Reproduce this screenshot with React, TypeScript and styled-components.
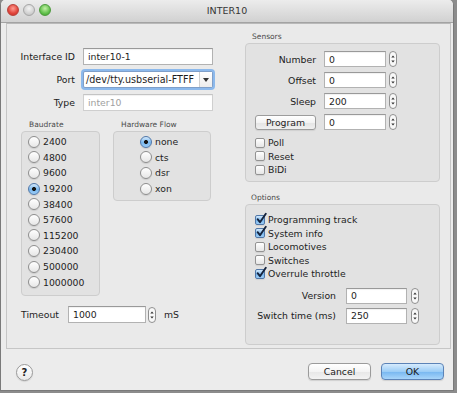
import React from "react";
import styled, { createGlobalStyle } from "styled-components";

const GlobalStyle = createGlobalStyle`
  html, body {
    margin: 0;
    padding: 0;
    background: #8c8c8c;
  }
  body {
    font-family: "DejaVu Sans", "Liberation Sans", sans-serif;
    font-size: 9.3px;
    color: #1e1e1e;
  }
`;

const Window = styled.div`
  box-sizing: border-box;
  width: 454px;
  height: 391px;
  display: flex;
  flex-direction: column;
  background: #ececec;
  border: 1px solid #7a7a7a;
  border-top: none;
  border-radius: 5px 5px 0 0;
  overflow: hidden;
`;

const TitleBar = styled.div`
  flex: none;
  height: 22px;
  display: grid;
  grid-template-columns: 1fr auto 1fr;
  align-items: center;
  background: linear-gradient(#ececec, #d1d1d1);
  border-bottom: 1px solid #a3a3a3;
`;

const Lights = styled.div`
  display: flex;
  gap: 4px;
  padding-left: 6px;
  margin-top: -2px;
`;

const Light = styled.span<{ $color: "red" | "gray" | "green" }>`
  box-sizing: border-box;
  width: 12px;
  height: 12px;
  border-radius: 50%;
  border: 1px solid
    ${(p) => (p.$color === "red" ? "#b8413a" : p.$color === "green" ? "#4c9a3c" : "#a6a6a6")};
  background: ${(p) =>
    p.$color === "red"
      ? "radial-gradient(circle at 50% 35%, #ff9c92, #e0443a 60%, #c3322a)"
      : p.$color === "green"
      ? "radial-gradient(circle at 50% 35%, #c3f0a6, #62c14d 60%, #3f9a2e)"
      : "radial-gradient(circle at 50% 35%, #f4f4f4, #d2d2d2 60%, #b9b9b9)"};
`;

const Title = styled.div`
  font-size: 9.5px;
  color: #363636;
  margin-top: -2px;
`;

const Panel = styled.div`
  box-sizing: border-box;
  flex: none;
  height: 326px;
  margin: 0 2px 0 5px;
  border: 1px solid #c6c6c6;
  border-top-color: #b9b9b9;
  background: #eaeaea;
  display: grid;
  grid-template-columns: 238px 195px;
`;

const LeftCol = styled.div`
  display: flex;
  flex-direction: column;
  padding-top: 24px;
`;

const FormGrid = styled.div`
  display: grid;
  grid-template-columns: 68px 130px;
  column-gap: 8px;
  row-gap: 6px;
  align-items: center;
`;

const Label = styled.span`
  text-align: right;
  white-space: nowrap;
  color: #202020;
`;

const Field = styled.div<{ $w: number; $h?: number; $disabled?: boolean }>`
  box-sizing: border-box;
  width: ${(p) => p.$w}px;
  height: ${(p) => p.$h ?? 16}px;
  padding: 0 4px;
  display: flex;
  align-items: center;
  background: #fff;
  border: 1px solid ${(p) => (p.$disabled ? "#cfcfcf" : "#b2b2b2")};
  border-top-color: ${(p) => (p.$disabled ? "#c4c4c4" : "#999")};
  box-shadow: inset 0 1px 1px rgba(0, 0, 0, 0.06);
  color: ${(p) => (p.$disabled ? "#a0a0a0" : "#1e1e1e")};
  white-space: nowrap;
  overflow: hidden;
`;

const Combo = styled.div`
  box-sizing: border-box;
  width: 130px;
  height: 17px;
  display: flex;
  background: #fff;
  border: 1px solid #7f9fc9;
  border-radius: 2px;
  box-shadow: 0 0 0 2px #8cb9ec;
`;

const ComboText = styled.span`
  flex: 1;
  overflow: hidden;
  white-space: nowrap;
  padding-left: 2px;
  line-height: 15px;
  font-size: 9.6px;
`;

const ComboArrow = styled.span`
  flex: none;
  width: 12px;
  display: flex;
  align-items: center;
  justify-content: center;
  border-left: 1px solid #d0d0d0;
  background: linear-gradient(#ffffff, #ececec);
`;

const GroupsRow = styled.div`
  display: flex;
  gap: 13px;
  margin: 8px 0 0 14px;
`;

const Group = styled.div`
  display: flex;
  flex-direction: column;
`;

const GroupTitle = styled.div<{ $indent?: number; $top?: number }>`
  height: 12px;
  line-height: 12px;
  font-size: 7.5px;
  color: #4a4a4a;
  padding-left: ${(p) => p.$indent ?? 8}px;
  margin-top: ${(p) => p.$top ?? 0}px;
`;

const GroupBox = styled.div<{ $w: number; $h: number; $pad: string }>`
  box-sizing: border-box;
  width: ${(p) => p.$w}px;
  height: ${(p) => p.$h}px;
  padding: ${(p) => p.$pad};
  background: #e2e2e2;
  border: 1px solid #cdcdcd;
  border-radius: 4px;
  display: flex;
  flex-direction: column;
`;

const RadioRow = styled.div`
  height: 15.6px;
  display: flex;
  align-items: center;
  gap: 3px;
`;

const RadioDot = styled.span<{ $on?: boolean }>`
  box-sizing: border-box;
  width: 12px;
  height: 12px;
  border-radius: 50%;
  border: 1px solid ${(p) => (p.$on ? "#5077a8" : "#8e8e8e")};
  background: ${(p) =>
    p.$on
      ? "radial-gradient(circle, #161616 0 1.7px, transparent 2.3px), linear-gradient(#d4e9fc, #7ab8ee 55%, #9cccf6)"
      : "linear-gradient(#ffffff, #e6e6e6)"};
  box-shadow: 0 1px 1px rgba(0, 0, 0, 0.1);
`;

const TimeoutRow = styled.div`
  display: flex;
  align-items: center;
  margin: 10px 0 0 14px;
`;

const TimeoutLabel = styled.span`
  width: 47px;
`;

const Unit = styled.span`
  margin-left: 8px;
`;

const SpinField = styled.div<{ $gap: number }>`
  display: flex;
  align-items: center;
  gap: ${(p) => p.$gap}px;
`;

const Spin = styled.svg`
  flex: none;
`;

const RightCol = styled.div`
  display: flex;
  flex-direction: column;
  padding-top: 7px;
`;

const Rows = styled.div<{ $label: number; $gap: number; $col: number }>`
  display: grid;
  grid-template-columns: ${(p) => p.$label}px auto;
  justify-content: start;
  column-gap: ${(p) => p.$col}px;
  row-gap: ${(p) => p.$gap}px;
  align-items: center;
  grid-auto-rows: 16px;
`;

const SmallButton = styled.div`
  box-sizing: border-box;
  justify-self: end;
  width: 61px;
  height: 15px;
  display: flex;
  align-items: center;
  justify-content: center;
  background: linear-gradient(#ffffff, #f3f3f3 50%, #e4e4e4 51%, #f0f0f0);
  border: 1px solid #9c9c9c;
  border-radius: 3px;
  box-shadow: 0 1px 1px rgba(0, 0, 0, 0.08);
`;

const Checks = styled.div<{ $top: number; $bottom?: number }>`
  display: flex;
  flex-direction: column;
  margin-top: ${(p) => p.$top}px;
  margin-bottom: ${(p) => p.$bottom ?? 0}px;
  padding-left: 9px;
`;

const CheckRow = styled.div`
  height: 13.5px;
  display: flex;
  align-items: center;
  gap: 3px;
`;

const CheckBox = styled.span<{ $on?: boolean }>`
  position: relative;
  box-sizing: border-box;
  width: 10px;
  height: 10px;
  border-radius: 2px;
  border: 1px solid ${(p) => (p.$on ? "#5077a8" : "#939393")};
  background: ${(p) =>
    p.$on ? "linear-gradient(#d4e9fc, #7ab8ee 55%, #9cccf6)" : "linear-gradient(#ffffff, #e6e6e6)"};
  box-shadow: 0 1px 1px rgba(0, 0, 0, 0.08);
`;

const CheckMark = styled.svg`
  position: absolute;
  left: 0px;
  top: -3px;
  overflow: visible;
`;

const Footer = styled.div`
  flex: 1;
  display: flex;
  align-items: flex-start;
  padding: 14px 9px 0 15px;
`;

const HelpButton = styled.div`
  box-sizing: border-box;
  width: 17px;
  height: 17px;
  margin-top: 1px;
  border-radius: 50%;
  border: 1px solid #9a9a9a;
  background: linear-gradient(#ffffff, #e9e9e9);
  display: flex;
  align-items: center;
  justify-content: center;
  font-weight: bold;
  font-size: 10px;
  color: #222;
  box-shadow: 0 1px 1px rgba(0, 0, 0, 0.1);
`;

const Buttons = styled.div`
  margin-left: auto;
  display: flex;
  gap: 10px;
`;

const DialogButton = styled.div<{ $primary?: boolean }>`
  box-sizing: border-box;
  width: 63px;
  height: 17px;
  display: flex;
  align-items: center;
  justify-content: center;
  border-radius: 4px;
  border: 1px solid ${(p) => (p.$primary ? "#5c83b7" : "#9b9b9b")};
  background: ${(p) =>
    p.$primary
      ? "linear-gradient(#d6ebfd, #9ccdf6 50%, #76b6f0 51%, #a8d5fa)"
      : "linear-gradient(#ffffff, #f4f4f4 50%, #e7e7e7 51%, #f3f3f3)"};
  box-shadow: 0 1px 1px rgba(0, 0, 0, 0.12);
  color: #1a1a1a;
`;

const Spinner = () => (
  <Spin width="8" height="16" viewBox="0 0 8 16">
    <rect x="0.5" y="0.5" width="7" height="15" rx="3.5" fill="#f8f8f8" stroke="#8f8f8f" />
    <path d="M2.3 6.6 L4 4.4 L5.7 6.6 Z" fill="#333" />
    <path d="M2.3 9.4 L4 11.6 L5.7 9.4 Z" fill="#333" />
  </Spin>
);

const NumberField = ({ value, w, h, gap }: { value: string; w: number; h?: number; gap: number }) => (
  <SpinField $gap={gap}>
    <Field $w={w} $h={h}>{value}</Field>
    <Spinner />
  </SpinField>
);

const Radio = ({ label, on }: { label: string; on?: boolean }) => (
  <RadioRow>
    <RadioDot $on={on} />
    <span>{label}</span>
  </RadioRow>
);

const Check = ({ label, on }: { label: string; on?: boolean }) => (
  <CheckRow>
    <CheckBox $on={on}>
      {on && (
        <CheckMark width="11" height="11" viewBox="0 0 11 11">
          <path
            d="M1.6 6.2 L4 9.2 L9.8 0.8"
            fill="none"
            stroke="#15233d"
            strokeWidth="1.9"
            strokeLinecap="round"
            strokeLinejoin="round"
          />
        </CheckMark>
      )}
    </CheckBox>
    <span>{label}</span>
  </CheckRow>
);

const bauds = ["2400", "4800", "9600", "19200", "38400", "57600", "115200", "230400", "500000", "1000000"];
const flows = ["none", "cts", "dsr", "xon"];

const App = () => {
  return (
    <>
      <GlobalStyle />
      <Window>
        <TitleBar>
          <Lights>
            <Light $color="red" />
            <Light $color="gray" />
            <Light $color="green" />
          </Lights>
          <Title>INTER10</Title>
          <span />
        </TitleBar>

        <Panel>
          <LeftCol>
            <FormGrid>
              <Label>Interface ID</Label>
              <Field $w={130} $h={17}>inter10-1</Field>
              <Label>Port</Label>
              <Combo>
                <ComboText>/dev/tty.usbserial-FTFF</ComboText>
                <ComboArrow>
                  <svg width="6" height="4" viewBox="0 0 6 4">
                    <path d="M0 0 L6 0 L3 4 Z" fill="#333" />
                  </svg>
                </ComboArrow>
              </Combo>
              <Label>Type</Label>
              <Field $w={130} $h={17} $disabled>inter10</Field>
            </FormGrid>

            <GroupsRow>
              <Group>
                <GroupTitle>Baudrate</GroupTitle>
                <GroupBox $w={79} $h={165} $pad="2px 0 0 6px">
                  {bauds.map((b) => (
                    <Radio key={b} label={b} on={b === "19200"} />
                  ))}
                </GroupBox>
              </Group>
              <Group>
                <GroupTitle>Hardware Flow</GroupTitle>
                <GroupBox $w={98} $h={70} $pad="2px 0 0 26px">
                  {flows.map((f) => (
                    <Radio key={f} label={f} on={f === "none"} />
                  ))}
                </GroupBox>
              </Group>
            </GroupsRow>

            <TimeoutRow>
              <TimeoutLabel>Timeout</TimeoutLabel>
              <NumberField value="1000" w={78} h={17} gap={2} />
              <Unit>mS</Unit>
            </TimeoutRow>
          </LeftCol>

          <RightCol>
            <GroupTitle $indent={7}>Sensors</GroupTitle>
            <GroupBox $w={195} $h={139} $pad="7px 0 0 0">
              <Rows $label={70} $gap={5} $col={8}>
                <Label>Number</Label>
                <NumberField value="0" w={62} gap={3} />
                <Label>Offset</Label>
                <NumberField value="0" w={62} gap={3} />
                <Label>Sleep</Label>
                <NumberField value="200" w={62} gap={3} />
                <SmallButton>Program</SmallButton>
                <NumberField value="0" w={62} gap={3} />
              </Rows>
              <Checks $top={6}>
                <Check label="Poll" />
                <Check label="Reset" />
                <Check label="BiDi" />
              </Checks>
            </GroupBox>

            <GroupTitle $indent={6} $top={10}>Options</GroupTitle>
            <GroupBox $w={195} $h={141} $pad="8px 0 0 0">
              <Checks $top={0} $bottom={7}>
                <Check label="Programming track" on />
                <Check label="System info" on />
                <Check label="Locomotives" />
                <Check label="Switches" />
                <Check label="Overrule throttle" on />
              </Checks>
              <Rows $label={90} $gap={4} $col={10}>
                <Label>Version</Label>
                <NumberField value="0" w={61} gap={4} />
                <Label>Switch time (ms)</Label>
                <NumberField value="250" w={61} gap={4} />
              </Rows>
            </GroupBox>
          </RightCol>
        </Panel>

        <Footer>
          <HelpButton>?</HelpButton>
          <Buttons>
            <DialogButton>Cancel</DialogButton>
            <DialogButton $primary>OK</DialogButton>
          </Buttons>
        </Footer>
      </Window>
    </>
  );
};

export default App;
